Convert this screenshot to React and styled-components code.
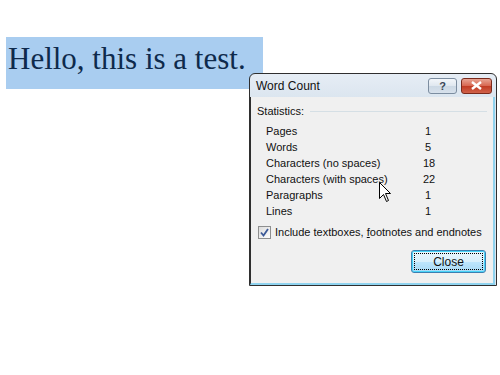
import React from "react";
import styled, { createGlobalStyle } from "styled-components";

const Global = createGlobalStyle`
  html, body { margin: 0; padding: 0; background: #fff; }
  body { width: 500px; height: 375px; overflow: hidden; position: relative; }
`;

const Page = styled.div`
  position: relative;
  width: 500px;
  height: 375px;
  padding: 37px 0 0 6px;
  box-sizing: border-box;
`;

const Selection = styled.div`
  display: inline-flex;
  align-items: center;
  height: 52px;
  width: 257px;
  box-sizing: border-box;
  padding: 0 0 9px 2px;
  background: #a9cdf0;
  color: #0e2a4c;
  font-family: "Liberation Serif", "DejaVu Serif", serif;
  font-size: 31px;
  white-space: nowrap;
`;

const Dialog = styled.div`
  position: absolute;
  left: 249px;
  top: 73px;
  width: 248px;
  height: 213px;
  box-sizing: border-box;
  border: 1px solid #2f2f2f;
  border-radius: 6px 6px 0 0;
  background: linear-gradient(#e6edf5, #dbe5ef 24px);
  display: flex;
  flex-direction: column;
  font-family: "Liberation Sans", Arial, sans-serif;
  font-size: 11px;
  color: #111;
`;

const TitleBar = styled.div`
  height: 23px;
  display: flex;
  align-items: center;
  padding: 0 4px 0 6px;
  gap: 4px;
`;

const Title = styled.div`
  flex: 1;
  font-size: 12px;
  padding-top: 1px;
`;

const CapButton = styled.div`
  width: ${p => p.$w}px;
  height: 16px;
  box-sizing: border-box;
  border: 1px solid ${p => (p.$red ? "#7a2a1c" : "#7c8da0")};
  border-radius: 3px;
  background: ${p =>
    p.$red
      ? "linear-gradient(#e8a493, #d7654f 50%, #c13a22 51%, #d0624a)"
      : "linear-gradient(#f3f6fa, #dfe7ef 50%, #ccd8e4 51%, #d7e1ec)"};
  display: flex;
  align-items: center;
  justify-content: center;
  color: ${p => (p.$red ? "#fff" : "#3a4656")};
  font-weight: bold;
  font-size: 11px;
`;

const Client = styled.div`
  flex: 1;
  margin: 0 1px 0 0;
  background: #f0f0f0;
  border-left: 1px solid #2f2f2f;
  border-bottom: 2px solid #8fd3ef;
  border-right: 2px solid #8fd3ef;
  padding: 6px 6px 0 6px;
  display: flex;
  flex-direction: column;
  white-space: nowrap;
`;

const GroupHead = styled.div`
  display: flex;
  align-items: center;
  gap: 6px;
  height: 16px;
  &::after {
    content: "";
    flex: 1;
    height: 1px;
    background: #d5dfe5;
  }
`;

const Stats = styled.div`
  display: grid;
  grid-template-columns: 157px 8px;
  padding: 4px 0 0 9px;
`;

const Row = styled.div`
  display: contents;
  span {
    height: 16px;
    line-height: 16px;
  }
  span:last-child {
    text-align: right;
  }
`;

const CheckRow = styled.div`
  display: flex;
  align-items: center;
  gap: 4px;
  margin-top: 5px;
  padding-left: 1px;
  height: 16px;
`;

const Box = styled.div`
  width: 13px;
  height: 13px;
  box-sizing: border-box;
  border: 1px solid #8e8f8f;
  background: linear-gradient(135deg, #dcdcdc, #fefefe);
  display: flex;
  align-items: center;
  justify-content: center;
`;

const Footer = styled.div`
  display: flex;
  justify-content: flex-end;
  margin-top: 10px;
  padding-right: 1px;
`;

const Button = styled.div`
  width: 75px;
  height: 23px;
  box-sizing: border-box;
  border: 1px solid #3c7fb1;
  border-radius: 3px;
  box-shadow: inset 0 0 0 1px #48d4f8;
  background: linear-gradient(#eaf6fd, #d9f0fc 50%, #bee6fd 51%, #a7d9f5);
  padding: 2px;
  display: flex;
`;

const Focus = styled.div`
  flex: 1;
  border: 1px dotted #000;
  display: flex;
  align-items: center;
  justify-content: center;
  font-size: 12px;
`;

const Cursor = styled.svg`
  position: absolute;
  left: 379px;
  top: 182px;
`;

const stats = [
  ["Pages", "1"],
  ["Words", "5"],
  ["Characters (no spaces)", "18"],
  ["Characters (with spaces)", "22"],
  ["Paragraphs", "1"],
  ["Lines", "1"],
];

export default function App() {
  return (
    <Page>
      <Global />
      <Selection>Hello, this is a test.</Selection>
      <Dialog>
        <TitleBar>
          <Title>Word Count</Title>
          <CapButton $w={29}>?</CapButton>
          <CapButton $w={31} $red>
            <svg width="11" height="9" viewBox="0 0 11 9">
              <path d="M1 1 L10 8 M10 1 L1 8" stroke="#fff" strokeWidth="2.4" />
            </svg>
          </CapButton>
        </TitleBar>
        <Client>
          <GroupHead>Statistics:</GroupHead>
          <Stats>
            {stats.map(([k, v]) => (
              <Row key={k}>
                <span>{k}</span>
                <span>{v}</span>
              </Row>
            ))}
          </Stats>
          <CheckRow>
            <Box>
              <svg width="9" height="9" viewBox="0 0 9 9">
                <path d="M1 4.5 L3.5 7.5 L8 1" fill="none" stroke="#3d5a98" strokeWidth="1.8" />
              </svg>
            </Box>
            <span>
              Include textboxes, <u>f</u>ootnotes and endnotes
            </span>
          </CheckRow>
          <Footer>
            <Button>
              <Focus>Close</Focus>
            </Button>
          </Footer>
        </Client>
      </Dialog>
      <Cursor width="13" height="21" viewBox="0 0 13 21">
        <path
          d="M0.5 0.5 L0.5 16.5 L4.5 12.5 L7.5 19.5 L9.5 18.5 L6.5 11.5 L11.5 11.5 Z"
          fill="#fff"
          stroke="#000"
          strokeWidth="1"
        />
      </Cursor>
    </Page>
  );
}
